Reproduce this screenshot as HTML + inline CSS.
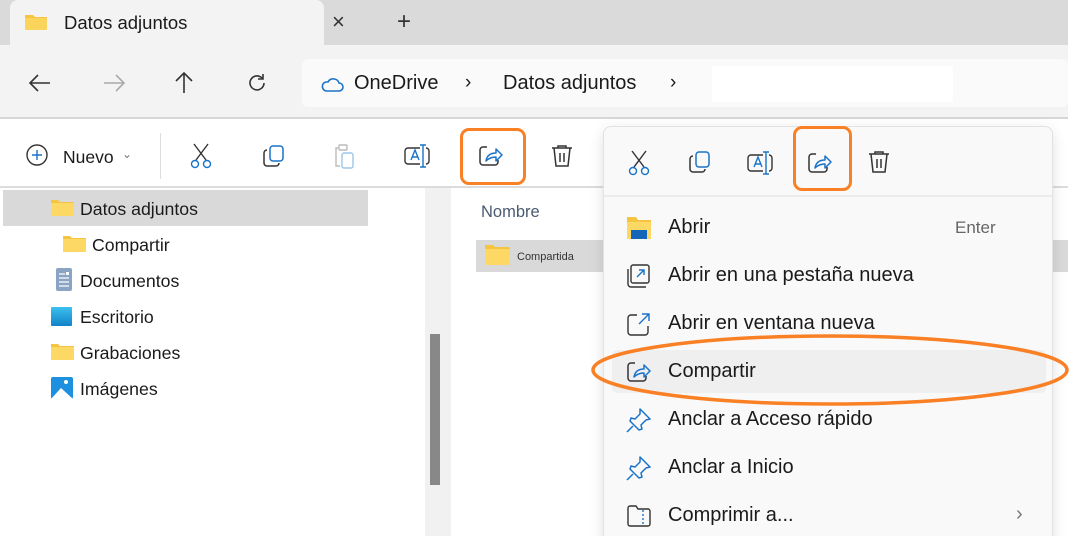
<!DOCTYPE html>
<html><head><meta charset="utf-8"><style>
*{margin:0;padding:0;box-sizing:border-box}
html,body{width:1081px;height:555px;overflow:hidden}
body{background:#fff;font-family:"Liberation Sans",sans-serif;color:#1a1a1a;position:relative}
.a{position:absolute}
svg{position:absolute;overflow:visible}
.t{position:absolute;white-space:nowrap}
.s{font-size:17.7px}
.m{font-size:20px}
</style></head><body>
<div class="a" style="left:0;top:0;width:1068px;height:45px;background:#dadada"></div>
<div class="a" style="left:10px;top:0;width:314px;height:46px;background:#f3f3f3;border-radius:8px 8px 0 0"></div>
<svg style="left:24px;top:13px" width="24" height="18"><path d="M1 2h8l2 2h12v13H1z" fill="#f5c542"/><path d="M1 5h22v12H1z" fill="#fbd45c"/></svg>
<div class="t" style="left:64px;top:12px;font-size:18.5px">Datos adjuntos</div>
<div class="t" style="left:332px;top:9px;font-size:22px;color:#333">×</div>
<div class="t" style="left:397px;top:8px;font-size:24px;color:#333">+</div>
<div class="a" style="left:0;top:45px;width:1068px;height:73px;background:#f3f3f3"></div>
<div class="a" style="left:0;top:117px;width:1068px;height:2px;background:#d6d6d6"></div>
<svg style="left:28px;top:72px" width="24" height="22" fill="none" stroke="#333" stroke-width="1.6"><path d="M2 11h20M10 3l-8 8 8 8"/></svg>
<svg style="left:102px;top:72px" width="24" height="22" fill="none" stroke="#aaa" stroke-width="1.6"><path d="M2 11h20M14 3l8 8-8 8"/></svg>
<svg style="left:173px;top:71px" width="22" height="24" fill="none" stroke="#333" stroke-width="1.6"><path d="M11 2v20M3 10l8-8 8 8"/></svg>
<svg style="left:246px;top:72px" width="22" height="22" fill="none" stroke="#333" stroke-width="1.6"><path d="M18 11a7 7 0 1 1-2-5M17 2v5h-5"/></svg>
<div class="a" style="left:302px;top:59px;width:766px;height:48px;background:#fafafa;border-radius:6px"></div>
<div class="a" style="left:712px;top:66px;width:241px;height:36px;background:#fff"></div>
<svg style="left:320px;top:76px" width="24" height="16" fill="none" stroke="#1a73c8" stroke-width="1.6"><path d="M6 15h13a4 4 0 0 0 0-8 6 6 0 0 0-11-1 4.5 4.5 0 0 0-2 9z"/></svg>
<div class="t" style="left:354px;top:72px;font-size:20px">OneDrive</div>
<div class="t" style="left:465px;top:72px;font-size:19px">›</div>
<div class="t" style="left:503px;top:72px;font-size:20px">Datos adjuntos</div>
<div class="t" style="left:670px;top:72px;font-size:19px">›</div>
<div class="a" style="left:0;top:186px;width:1068px;height:2px;background:#dcdcdc"></div>
<svg style="left:26px;top:144px" width="24" height="24" fill="none" stroke="#333" stroke-width="1.4"><circle cx="11" cy="11" r="10"/><path d="M11 6v10M6 11h10" stroke="#1a73c8"/></svg>
<div class="t" style="left:63px;top:147px;font-size:17.5px">Nuevo</div>
<div class="t" style="left:122px;top:147px;font-size:12px;color:#777">⌄</div>
<div class="a" style="left:160px;top:133px;width:1px;height:46px;background:#ddd"></div>
<svg style="left:190px;top:143px" width="22" height="26" fill="none" stroke-width="1.4"><path d="M4 1l12 16M18 1L6 17" stroke="#333"/><circle cx="5" cy="21" r="3.5" stroke="#1a73c8"/><circle cx="17" cy="21" r="3.5" stroke="#1a73c8"/></svg>
<svg style="left:262px;top:145px" width="24" height="24" fill="none" stroke-width="1.5"><rect x="8" y="1" width="13" height="15" rx="3" stroke="#1a73c8"/><path d="M5 5a3 3 0 0 0-3 3v10a3 3 0 0 0 3 3h9a3 3 0 0 0 3-3" stroke="#333"/></svg>
<svg style="left:333px;top:144px" width="22" height="26" fill="none" stroke-width="1.4"><path d="M5 4H3v18h4" stroke="#bbb"/><rect x="6" y="1" width="8" height="5" rx="1" stroke="#bbb"/><rect x="9" y="9" width="11" height="15" rx="2" stroke="#9cc6ea"/></svg>
<svg style="left:404px;top:143px" width="28" height="26" fill="none" stroke-width="1.4"><rect x="1" y="5" width="24" height="16" rx="3" stroke="#333"/><rect x="16" y="4" width="6" height="18" fill="#fff" stroke="none"/><path d="M7 17l4-10 4 10M8.5 14h5" stroke="#1a73c8"/><path d="M16 2h6M19 2v22M16 24h6" stroke="#1a73c8"/></svg>
<svg style="left:479px;top:145px" width="24" height="22" fill="none" stroke-width="1.5"><path d="M8 2H4a3 3 0 0 0-3 3v12a3 3 0 0 0 3 3h12a3 3 0 0 0 3-3v-2" stroke="#333"/><path d="M7 16c1-6 5-8 10-8V4l6 6-6 6v-4c-4 0-7 1-10 4z" stroke="#1a73c8" stroke-linejoin="round"/></svg>
<svg style="left:551px;top:144px" width="22" height="24" fill="none" stroke="#333" stroke-width="1.5"><path d="M1 4h20M7 4V2h8v2M3 4l2 18h12l2-18M9 9v9M13 9v9"/></svg>
<div class="a" style="left:460px;top:128px;width:66px;height:57px;border:3.5px solid #f98025;border-radius:9px"></div>
<div class="a" style="left:3px;top:190px;width:365px;height:36px;background:#d9d9d9"></div>
<div class="a" style="left:425px;top:188px;width:26px;height:348px;background:#f1f1f1"></div>
<div class="a" style="left:430px;top:334px;width:10px;height:151px;background:#888"></div>
<svg style="left:51px;top:199px" width="24" height="18"><path d="M0 1h7l2 2h14v14H0z" fill="#f5c542"/><path d="M0 4h23v13H0z" fill="#fdd865"/></svg>
<div class="t s" style="left:80px;top:199px">Datos adjuntos</div>
<svg style="left:63px;top:235px" width="24" height="18"><path d="M0 1h7l2 2h14v14H0z" fill="#f5c542"/><path d="M0 4h23v13H0z" fill="#fdd865"/></svg>
<div class="t s" style="left:92px;top:235px">Compartir</div>
<svg style="left:56px;top:268px" width="18" height="24"><rect x="0" y="0" width="16" height="23" rx="2" fill="#8aa4c4"/><path d="M3 6h6M3 10h10M3 14h10M3 18h10" stroke="#fff" stroke-width="1.2"/><rect x="10" y="4" width="3" height="3" fill="#fff"/></svg>
<div class="t s" style="left:80px;top:271px">Documentos</div>
<div class="a" style="left:51px;top:307px;width:21px;height:19px;background:linear-gradient(#3cc0ee,#1282c8);border-radius:1px"></div>
<div class="t s" style="left:80px;top:307px">Escritorio</div>
<svg style="left:51px;top:343px" width="24" height="18"><path d="M0 1h7l2 2h14v14H0z" fill="#f5c542"/><path d="M0 4h23v13H0z" fill="#fdd865"/></svg>
<div class="t s" style="left:80px;top:343px">Grabaciones</div>
<svg style="left:51px;top:377px" width="22" height="22"><rect width="22" height="22" rx="2" fill="#1e90e0"/><path d="M0 22l10-11 12 11z" fill="#fff"/><circle cx="15" cy="5" r="2" fill="#fff"/></svg>
<div class="t s" style="left:80px;top:379px">Imágenes</div>
<div class="t" style="left:481px;top:203px;font-size:16.5px;color:#4a5a70">Nombre</div>
<div class="a" style="left:476px;top:240px;width:592px;height:32px;background:#d9d9d9"></div>
<svg style="left:485px;top:244px" width="26" height="22"><path d="M0 1h8l2 2h15v18H0z" fill="#f5c542"/><path d="M0 5h25v16H0z" fill="#fdd865"/></svg>
<div class="t" style="left:517px;top:251px;font-size:11px;color:#333">Compartida</div>
<div class="a" style="left:603px;top:126px;width:450px;height:420px;background:#f9f9f9;border:1px solid #e2e2e2;border-radius:8px;box-shadow:0 4px 14px rgba(0,0,0,.12)"></div>
<div class="a" style="left:604px;top:195px;width:448px;height:2px;background:#ebebeb"></div>
<svg style="left:628px;top:150px" width="22" height="26" fill="none" stroke-width="1.4"><path d="M4 1l12 16M18 1L6 17" stroke="#333"/><circle cx="5" cy="21" r="3.5" stroke="#1a73c8"/><circle cx="17" cy="21" r="3.5" stroke="#1a73c8"/></svg>
<svg style="left:688px;top:151px" width="24" height="24" fill="none" stroke-width="1.5"><rect x="8" y="1" width="13" height="15" rx="3" stroke="#1a73c8"/><path d="M5 5a3 3 0 0 0-3 3v10a3 3 0 0 0 3 3h9a3 3 0 0 0 3-3" stroke="#333"/></svg>
<svg style="left:747px;top:150px" width="28" height="26" fill="none" stroke-width="1.4"><rect x="1" y="5" width="24" height="16" rx="3" stroke="#333"/><rect x="16" y="4" width="6" height="18" fill="#f9f9f9" stroke="none"/><path d="M7 17l4-10 4 10M8.5 14h5" stroke="#1a73c8"/><path d="M16 2h6M19 2v22M16 24h6" stroke="#1a73c8"/></svg>
<svg style="left:808px;top:152px" width="24" height="22" fill="none" stroke-width="1.5"><path d="M8 2H4a3 3 0 0 0-3 3v12a3 3 0 0 0 3 3h12a3 3 0 0 0 3-3v-2" stroke="#333"/><path d="M7 16c1-6 5-8 10-8V4l6 6-6 6v-4c-4 0-7 1-10 4z" stroke="#1a73c8" stroke-linejoin="round"/></svg>
<svg style="left:868px;top:150px" width="22" height="24" fill="none" stroke="#333" stroke-width="1.5"><path d="M1 4h20M7 4V2h8v2M3 4l2 18h12l2-18M9 9v9M13 9v9"/></svg>
<div class="a" style="left:793px;top:126px;width:59px;height:65px;border:3.5px solid #f98025;border-radius:9px"></div>
<div class="a" style="left:612px;top:350px;width:434px;height:43px;background:#efefef;border-radius:5px"></div>
<svg style="left:627px;top:217px" width="26" height="22"><path d="M0 0h9l2 3h13v19H0z" fill="#f5c542"/><path d="M0 5h24v17H0z" fill="#fdd865"/><rect x="4" y="13" width="16" height="9" fill="#1466b8"/></svg>
<div class="t m" style="left:668px;top:216px">Abrir</div>
<div class="t" style="left:955px;top:218px;font-size:17px;color:#666">Enter</div>
<svg style="left:627px;top:264px" width="24" height="24" fill="none" stroke="#333" stroke-width="1.4"><rect x="4" y="1" width="18" height="18" rx="2"/><path d="M1 5v15a3 3 0 0 0 3 3h15"/><path d="M10 13l7-7M12 6h5v5" stroke="#1a73c8"/></svg>
<div class="t m" style="left:668px;top:264px">Abrir en una pestaña nueva</div>
<svg style="left:627px;top:312px" width="24" height="24" fill="none" stroke="#333" stroke-width="1.4"><path d="M10 3H4a3 3 0 0 0-3 3v14a3 3 0 0 0 3 3h14a3 3 0 0 0 3-3v-6"/><path d="M12 12l10-10M15 2h7v7" stroke="#1a73c8"/></svg>
<div class="t m" style="left:668px;top:312px">Abrir en ventana nueva</div>
<svg style="left:627px;top:361px" width="24" height="22" fill="none" stroke-width="1.5"><path d="M8 2H4a3 3 0 0 0-3 3v12a3 3 0 0 0 3 3h12a3 3 0 0 0 3-3v-2" stroke="#333"/><path d="M7 16c1-6 5-8 10-8V4l6 6-6 6v-4c-4 0-7 1-10 4z" stroke="#1a73c8" stroke-linejoin="round"/></svg>
<div class="t m" style="left:668px;top:360px">Compartir</div>
<svg style="left:626px;top:408px" width="26" height="26" fill="none" stroke="#1a73c8" stroke-width="1.5"><path d="M14 1l10 10-4 1-5 5 1 4-3 1-9-9 1-3 4 1 5-5z" stroke-linejoin="round"/><path d="M7 18l-6 6"/></svg>
<div class="t m" style="left:668px;top:408px">Anclar a Acceso rápido</div>
<svg style="left:626px;top:456px" width="26" height="26" fill="none" stroke="#1a73c8" stroke-width="1.5"><path d="M14 1l10 10-4 1-5 5 1 4-3 1-9-9 1-3 4 1 5-5z" stroke-linejoin="round"/><path d="M7 18l-6 6"/></svg>
<div class="t m" style="left:668px;top:456px">Anclar a Inicio</div>
<svg style="left:627px;top:505px" width="24" height="22" fill="none" stroke="#333" stroke-width="1.4"><path d="M1 3a2 2 0 0 1 2-2h6l2 3h10a2 2 0 0 1 2 2v13a2 2 0 0 1-2 2H3a2 2 0 0 1-2-2z"/><path d="M16 5v15" stroke="#1a73c8" stroke-dasharray="2 2"/></svg>
<div class="t m" style="left:668px;top:504px">Comprimir a...</div>
<div class="t" style="left:1016px;top:503px;font-size:20px;color:#777">›</div>
<div class="a" style="left:0;top:536px;width:1081px;height:19px;background:#fff"></div>
<div class="a" style="left:1068px;top:0;width:13px;height:555px;background:#fff"></div>
<svg style="left:0;top:0" width="1081" height="555"><ellipse cx="830" cy="370" rx="237" ry="34" fill="none" stroke="#f98025" stroke-width="3.5"/></svg>
</body></html>
